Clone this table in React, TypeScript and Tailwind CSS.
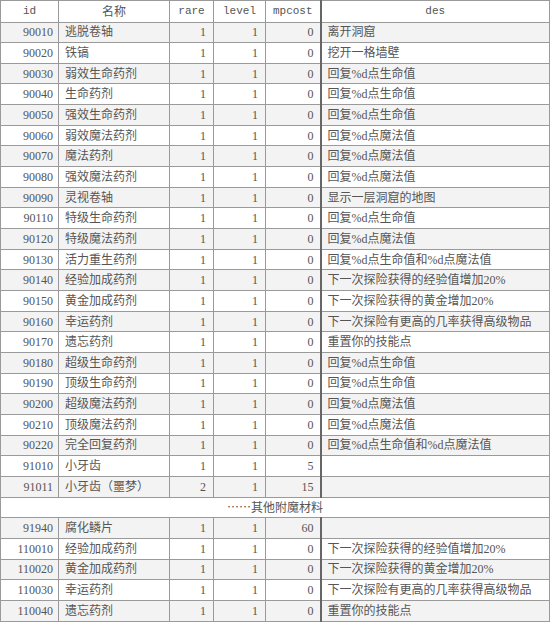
const rows: [string, string, number, number, number, string][] = [
  ['90010', '逃脱卷轴', 1, 1, 0, '离开洞窟'],
  ['90020', '铁镐', 1, 1, 0, '挖开一格墙壁'],
  ['90030', '弱效生命药剂', 1, 1, 0, '回复%d点生命值'],
  ['90040', '生命药剂', 1, 1, 0, '回复%d点生命值'],
  ['90050', '强效生命药剂', 1, 1, 0, '回复%d点生命值'],
  ['90060', '弱效魔法药剂', 1, 1, 0, '回复%d点魔法值'],
  ['90070', '魔法药剂', 1, 1, 0, '回复%d点魔法值'],
  ['90080', '强效魔法药剂', 1, 1, 0, '回复%d点魔法值'],
  ['90090', '灵视卷轴', 1, 1, 0, '显示一层洞窟的地图'],
  ['90110', '特级生命药剂', 1, 1, 0, '回复%d点生命值'],
  ['90120', '特级魔法药剂', 1, 1, 0, '回复%d点魔法值'],
  ['90130', '活力重生药剂', 1, 1, 0, '回复%d点生命值和%d点魔法值'],
  ['90140', '经验加成药剂', 1, 1, 0, '下一次探险获得的经验值增加20%'],
  ['90150', '黄金加成药剂', 1, 1, 0, '下一次探险获得的黄金增加20%'],
  ['90160', '幸运药剂', 1, 1, 0, '下一次探险有更高的几率获得高级物品'],
  ['90170', '遗忘药剂', 1, 1, 0, '重置你的技能点'],
  ['90180', '超级生命药剂', 1, 1, 0, '回复%d点生命值'],
  ['90190', '顶级生命药剂', 1, 1, 0, '回复%d点生命值'],
  ['90200', '超级魔法药剂', 1, 1, 0, '回复%d点魔法值'],
  ['90210', '顶级魔法药剂', 1, 1, 0, '回复%d点魔法值'],
  ['90220', '完全回复药剂', 1, 1, 0, '回复%d点生命值和%d点魔法值'],
  ['91010', '小牙齿', 1, 1, 5, ''],
  ['91011', '小牙齿（噩梦）', 2, 1, 15, ''],
];

const moreRows: [string, string, number, number, number, string][] = [
  ['91940', '腐化鳞片', 1, 1, 60, ''],
  ['110010', '经验加成药剂', 1, 1, 0, '下一次探险获得的经验值增加20%'],
  ['110020', '黄金加成药剂', 1, 1, 0, '下一次探险获得的黄金增加20%'],
  ['110030', '幸运药剂', 1, 1, 0, '下一次探险有更高的几率获得高级物品'],
  ['110040', '遗忘药剂', 1, 1, 0, '重置你的技能点'],
];

const cell = 'border border-[#9a9a9a] px-[5px] py-0 leading-none';

const Row = ({ r, shaded }: { r: (typeof rows)[number]; shaded: boolean }) => (
  <tr className={`h-[20.66px] ${shaded ? 'bg-[#f3f3f3]' : 'bg-white'}`}>
    <td className={`${cell} text-right`}>{r[0]}</td>
    <td className={`${cell} text-left pl-[6px]`}>{r[1]}</td>
    <td className={`${cell} text-right pr-[7px]`}>{r[2]}</td>
    <td className={`${cell} text-right pr-[7px]`}>{r[3]}</td>
    <td className={`${cell} text-right pr-[6px] border-r-2 border-r-[#666]`}>{r[4]}</td>
    <td className={`${cell} text-left pl-[6px]`}>{r[5]}</td>
  </tr>
);

export default function App() {
  return (
    <div className="bg-white w-[550px] h-[624px] overflow-hidden">
      <table
        className="w-[549px] table-fixed border-collapse text-[12px] text-[#555]"
        style={{ fontFamily: '"Liberation Serif", "Noto Sans CJK SC", serif' }}
      >
        <colgroup>
          <col className="w-[58px]" />
          <col className="w-[111px]" />
          <col className="w-[44px]" />
          <col className="w-[52px]" />
          <col className="w-[55px]" />
          <col className="w-[229px]" />
        </colgroup>
        <thead>
          <tr className="h-[21.5px] bg-white text-[11px] font-normal">
            <th className={`${cell} font-normal font-['Liberation_Mono',monospace]`}>id</th>
            <th className={`${cell} font-normal text-[12px] font-['Noto_Sans_CJK_SC',sans-serif]`}>名称</th>
            <th className={`${cell} font-normal font-['Liberation_Mono',monospace]`}>rare</th>
            <th className={`${cell} font-normal font-['Liberation_Mono',monospace]`}>level</th>
            <th className={`${cell} font-normal font-['Liberation_Mono',monospace] border-r-2 border-r-[#666]`}>
              mpcost
            </th>
            <th className={`${cell} font-normal font-['Liberation_Mono',monospace]`}>des</th>
          </tr>
        </thead>
        <tbody>
          {rows.map((r, i) => (
            <Row key={r[0]} r={r} shaded={i % 2 === 0} />
          ))}
          <tr className="h-[20.66px] bg-white">
            <td colSpan={6} className={`${cell} text-center`}>
              <span className="font-['Noto_Sans_CJK_SC',sans-serif]">……</span>其他附魔材料
            </td>
          </tr>
          {moreRows.map((r, i) => (
            <Row key={r[0]} r={r} shaded={i % 2 === 0} />
          ))}
        </tbody>
      </table>
    </div>
  );
}
